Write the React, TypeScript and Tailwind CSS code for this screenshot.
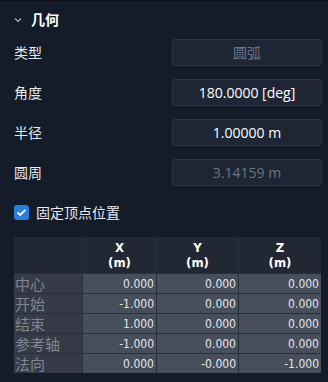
import React from 'react';

const cjk = "font-['Noto_Sans_CJK_SC',sans-serif]";
const num = "font-['Open_Sans','Noto_Sans_CJK_SC',sans-serif]";
const cell = "font-['DejaVu_Sans_Condensed','DejaVu_Sans',sans-serif]";

const rows = [
  { name: '中心', x: '0.000', y: '0.000', z: '0.000' },
  { name: '开始', x: '-1.000', y: '0.000', z: '0.000' },
  { name: '结束', x: '1.000', y: '0.000', z: '0.000' },
  { name: '参考轴', x: '-1.000', y: '0.000', z: '0.000' },
  { name: '法向', x: '0.000', y: '-0.000', z: '-1.000' },
];

function Field({ label, value, disabled }: { label: string; value: string; disabled?: boolean }) {
  return (
    <div className="flex items-center h-[27px]">
      <div className={`${cjk} text-[14px] text-[#e8eaee] pl-[14px] w-[172px]`}>{label}</div>
      <div
        className={`w-[150px] h-[27px] flex items-center justify-center rounded-[3px] border border-[#2c3446] bg-[#1e2636] text-[14px] ${num} ${
          disabled ? 'text-[#6e7581]' : 'text-white'
        }`}
      >
        {value}
      </div>
    </div>
  );
}

export default function App() {
  return (
    <div className="w-[328px] h-[382px] bg-[#141b29] border-t border-[#0c1019] overflow-hidden">
      {/* Section header */}
      <div className="h-[36px] flex items-center pl-[14px] gap-[9px]">
        <svg width="8" height="6" viewBox="0 0 8 6" className="mt-[1px]">
          <path d="M1 1.5 L4 4.5 L7 1.5" fill="none" stroke="#aeb3bc" strokeWidth="1.2" />
        </svg>
        <span className={`${cjk} text-[14px] font-bold text-white`}>几何</span>
      </div>

      <div className="flex flex-col gap-[13px] mt-[2px]">
        <Field label="类型" value="圆弧" disabled />
        <Field label="角度" value="180.0000 [deg]" />
        <Field label="半径" value="1.00000 m" />
        <Field label="圆周" value="3.14159 m" disabled />
      </div>

      {/* Checkbox */}
      <div className="flex items-center gap-[7px] pl-[14px] mt-[19px] h-[15px]">
        <div className="w-[15px] h-[15px] rounded-[3px] bg-[#2a7fd8] flex items-center justify-center">
          <svg width="11" height="9" viewBox="0 0 11 9">
            <path d="M1.5 4.5 L4.2 7 L9.5 1.8" fill="none" stroke="white" strokeWidth="1.8" />
          </svg>
        </div>
        <span className={`${cjk} text-[14px] text-[#e8eaee]`}>固定顶点位置</span>
      </div>

      {/* Vertex table */}
      <div className="ml-[14px] mt-[17px] w-[307px] grid grid-cols-[68px_73px_81px_82px] gap-px bg-[#2a2f3b]">
        <div className="h-[36px] bg-[#222734]" />
        {['X', 'Y', 'Z'].map((h) => (
          <div
            key={h}
            className={`h-[36px] bg-[#222734] flex flex-col items-center justify-center text-white font-bold text-[13px] leading-[15px] ${cell}`}
          >
            <span>{h}</span>
            <span>(m)</span>
          </div>
        ))}
        {rows.map((r) => (
          <React.Fragment key={r.name}>
            <div className={`h-[19px] bg-[#363b47] pl-[1px] flex items-center text-[15px] leading-none text-[#7f8590] ${cjk}`}>
              {r.name}
            </div>
            {[r.x, r.y, r.z].map((v, i) => (
              <div
                key={i}
                className={`h-[19px] bg-[#474e5c] pr-[2px] flex items-center justify-end text-[12px] text-[#e4e6ea] ${cell}`}
              >
                {v}
              </div>
            ))}
          </React.Fragment>
        ))}
      </div>
    </div>
  );
}
